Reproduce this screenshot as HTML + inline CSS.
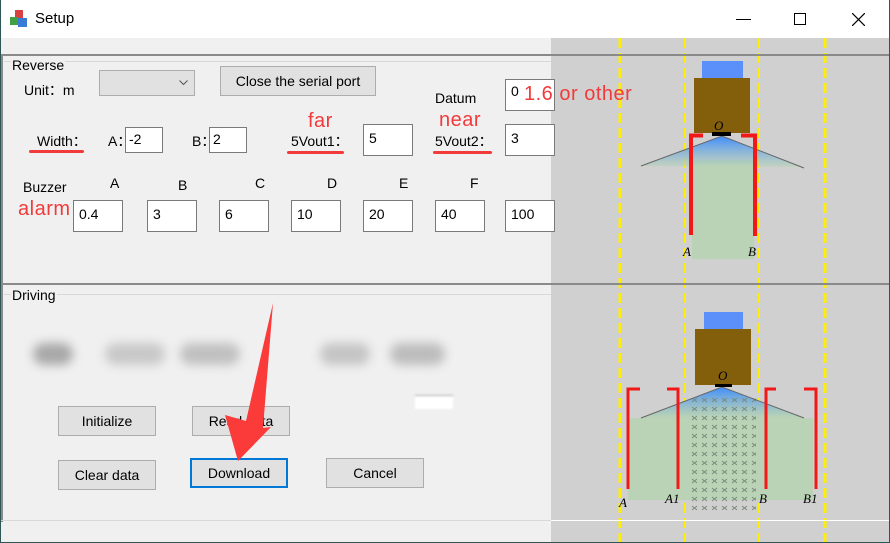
<!DOCTYPE html>
<html><head><meta charset="utf-8"><style>
*{margin:0;padding:0;box-sizing:border-box}
body{width:890px;height:543px;overflow:hidden;background:#f0f0f0;font-family:"Liberation Sans","Noto Sans CJK SC",sans-serif;font-size:14px;color:#000;position:relative}
.a{position:absolute;white-space:nowrap}
.box{position:absolute;background:#fff;border:1px solid #7a7a7a;font-size:14px;padding:5px 0 0 5px}
.btn{position:absolute;background:#e1e1e1;border:1px solid #adadad;text-align:center;font-size:14px}
.red{color:#f23a3a;font-size:20px;letter-spacing:0.5px}
.ul{position:absolute;height:3px;background:#f23a3a;border-radius:2px}
</style></head><body>
<div class="a" style="left:0;top:0;width:890px;height:38px;background:#fff"></div>
<svg class="a" style="left:9px;top:9px" width="20" height="20" viewBox="0 0 20 20"><rect x="6" y="1" width="8" height="8" fill="#d94040"/><rect x="1" y="8" width="8" height="8" fill="#3fa046"/><rect x="9" y="9" width="9" height="9" fill="#3a7bd5"/></svg>
<div class="a" style="left:35px;top:10px;font-size:15px">Setup</div>
<div class="a" style="left:736px;top:19px;width:15px;height:1px;background:#000"></div>
<div class="a" style="left:794px;top:13px;width:12px;height:12px;border:1px solid #000"></div>
<svg class="a" style="left:852px;top:13px" width="13" height="13"><path d="M0 0L13 13M13 0L0 13" stroke="#000" stroke-width="1.2"/></svg>

<svg class="a" style="left:551px;top:38px" width="339" height="505" viewBox="551 38 339 505">
<defs>
<linearGradient id="g" x1="0" y1="0" x2="0" y2="1"><stop offset="0" stop-color="#3c8cff"/><stop offset="1" stop-color="#bad3b6" stop-opacity="0.6"/></linearGradient>
<pattern id="x" width="10" height="9" patternUnits="userSpaceOnUse"><path d="M2 2L7 6M7 2L2 6" stroke="#7a8a7a" stroke-width="1"/></pattern>
</defs>
<rect x="551" y="38" width="339" height="505" fill="#d0d0d0"/>
<g stroke="#ffee00" stroke-width="3" stroke-dasharray="10,5">
<line x1="620" y1="38" x2="620" y2="543"/><line x1="685" y1="38" x2="685" y2="543" stroke-width="2"/><line x1="759" y1="38" x2="759" y2="543" stroke-width="2"/><line x1="825" y1="38" x2="825" y2="543"/></g>
<rect x="551" y="54" width="339" height="2" fill="#8a8a8a"/>
<rect x="551" y="283" width="339" height="2" fill="#8a8a8a"/>
<rect x="551" y="520" width="339" height="1" fill="#fff"/>
<rect x="692" y="160" width="62" height="99" fill="#bad3b6"/>
<polygon points="722,136 640,166 804,167" fill="url(#g)"/>
<path d="M641 166L722 136L804 168" stroke="#666" fill="none"/>
<rect x="702" y="61" width="41" height="17" fill="#5b8ff9"/>
<rect x="694" y="78" width="56" height="55" fill="#835f0b"/>
<rect x="712" y="132" width="19" height="4" fill="#000"/>
<path d="M703 135.5H691V235M741 135.5H755V236" stroke="#f21818" stroke-width="4" fill="none"/>
<g font-family="Liberation Serif" font-style="italic" font-size="13"><text x="714" y="130">O</text><text x="683" y="256">A</text><text x="748" y="256">B</text></g>
<polygon points="722,387 641,418 628,418 628,500 813,500 813,418 804,418" fill="#bad3b6"/>
<polygon points="722,387 641,418 804,418" fill="url(#g)"/>
<rect x="689" y="398" width="67" height="112" fill="url(#x)"/>
<path d="M641 418L722 387L804 418" stroke="#666" fill="none"/>
<rect x="704" y="312" width="39" height="17" fill="#5b8ff9"/>
<rect x="695" y="329" width="56" height="56" fill="#835f0b"/>
<rect x="715" y="384" width="17" height="3" fill="#000"/>
<path d="M640 389H628V489M667 389H678V489M776 389H766V489M804 389H816V489" stroke="#f21818" stroke-width="3" fill="none"/>
<g font-family="Liberation Serif" font-style="italic" font-size="13"><text x="718" y="380">O</text><text x="619" y="507">A</text><text x="665" y="503">A1</text><text x="759" y="503">B</text><text x="803" y="503">B1</text></g>
</svg>

<div class="a" style="left:1px;top:54px;width:550px;height:2px;background:#8a8a8a"></div>
<div class="a" style="left:1px;top:54px;width:2px;height:468px;background:#8a8a8a"></div>
<div class="a" style="left:4px;top:61px;width:547px;height:1px;background:#d8d8d8"></div>
<div class="a" style="left:1px;top:283px;width:550px;height:2px;background:#8a8a8a"></div>
<div class="a" style="left:4px;top:294px;width:547px;height:1px;background:#d8d8d8"></div>
<div class="a" style="left:1px;top:520px;width:550px;height:1px;background:#d8d8d8"></div>

<div class="a" style="left:11px;top:57px;background:#f0f0f0;padding:0 1px">Reverse</div>
<div class="a" style="left:24px;top:80px">Unit：m</div>
<div class="a" style="left:99px;top:70px;width:96px;height:26px;background:#e1e1e1;border:1px solid #adadad"></div>
<svg class="a" style="left:179px;top:80px" width="9" height="6"><path d="M0.5 0.5L4.5 4.5L8.5 0.5" stroke="#555" fill="none"/></svg>
<div class="btn" style="left:220px;top:66px;width:156px;height:30px;line-height:28px">Close the serial port</div>
<div class="a" style="left:435px;top:90px">Datum</div>
<div class="box" style="left:505px;top:79px;width:50px;height:32px;padding-top:3px">0</div>
<div class="a red" style="left:524px;top:83px">1.6 or other</div>

<div class="a" style="left:37px;top:131px">Width：</div><div class="ul" style="left:29px;top:150px;width:55px"></div>
<div class="a" style="left:108px;top:131px">A：</div><div class="box" style="left:125px;top:127px;width:38px;height:26px;padding:3px 0 0 3px">-2</div>
<div class="a" style="left:192px;top:131px">B：</div><div class="box" style="left:209px;top:127px;width:38px;height:26px;padding:3px 0 0 3px">2</div>
<div class="a red" style="left:308px;top:110px">far</div>
<div class="a" style="left:291px;top:131px">5Vout1：</div><div class="ul" style="left:287px;top:151px;width:57px"></div>
<div class="box" style="left:363px;top:124px;width:50px;height:32px">5</div>
<div class="a red" style="left:439px;top:109px">near</div>
<div class="a" style="left:435px;top:131px">5Vout2：</div><div class="ul" style="left:433px;top:151px;width:59px"></div>
<div class="box" style="left:505px;top:124px;width:50px;height:32px">3</div>

<div class="a" style="left:23px;top:179px">Buzzer</div>
<div class="a red" style="left:18px;top:198px">alarm</div>
<div class="a" style="left:110px;top:175px">A</div><div class="a" style="left:178px;top:177px">B</div><div class="a" style="left:255px;top:175px">C</div><div class="a" style="left:327px;top:175px">D</div><div class="a" style="left:399px;top:175px">E</div><div class="a" style="left:470px;top:175px">F</div>
<div class="box" style="left:73px;top:200px;width:50px;height:32px">0.4</div>
<div class="box" style="left:147px;top:200px;width:50px;height:32px">3</div>
<div class="box" style="left:219px;top:200px;width:50px;height:32px">6</div>
<div class="box" style="left:291px;top:200px;width:50px;height:32px">10</div>
<div class="box" style="left:363px;top:200px;width:50px;height:32px">20</div>
<div class="box" style="left:435px;top:200px;width:50px;height:32px">40</div>
<div class="box" style="left:505px;top:200px;width:50px;height:32px">100</div>

<div class="a" style="left:11px;top:287px;background:#f0f0f0;padding:0 1px">Driving</div>
<div class="a" style="left:25px;top:335px;width:440px;height:40px;filter:blur(5px)">
<div class="a" style="left:8px;top:8px;width:40px;height:22px;background:#a8a8a8;border-radius:11px"></div>
<div class="a" style="left:80px;top:8px;width:60px;height:22px;background:#c8c8c8;border-radius:11px"></div>
<div class="a" style="left:155px;top:8px;width:60px;height:22px;background:#c0c0c0;border-radius:11px"></div>
<div class="a" style="left:295px;top:8px;width:50px;height:22px;background:#c4c4c4;border-radius:11px"></div>
<div class="a" style="left:365px;top:8px;width:55px;height:22px;background:#bcbcbc;border-radius:11px"></div>
</div>
<div class="a" style="left:415px;top:395px;width:38px;height:14px;background:#fff;border-top:1px solid #aaa;filter:blur(1px)"></div>
<div class="btn" style="left:58px;top:406px;width:98px;height:30px;line-height:29px">Initialize</div>
<div class="btn" style="left:192px;top:406px;width:98px;height:30px;line-height:29px">Read data</div>
<div class="btn" style="left:58px;top:460px;width:98px;height:30px;line-height:29px">Clear data</div>
<div class="btn" style="left:190px;top:458px;width:98px;height:30px;line-height:27px;border:2px solid #0078d7">Download</div>
<div class="btn" style="left:326px;top:458px;width:98px;height:30px;line-height:29px">Cancel</div>
<svg class="a" style="left:0;top:0" width="890" height="543"><polygon points="273,303 263,428 271,427 238,461 225,415 246,421" fill="#fb3a3a"/></svg>

<div class="a" style="left:0;top:0;width:890px;height:543px;border:1px solid #2e5656;border-top:none"></div>
</body></html>
